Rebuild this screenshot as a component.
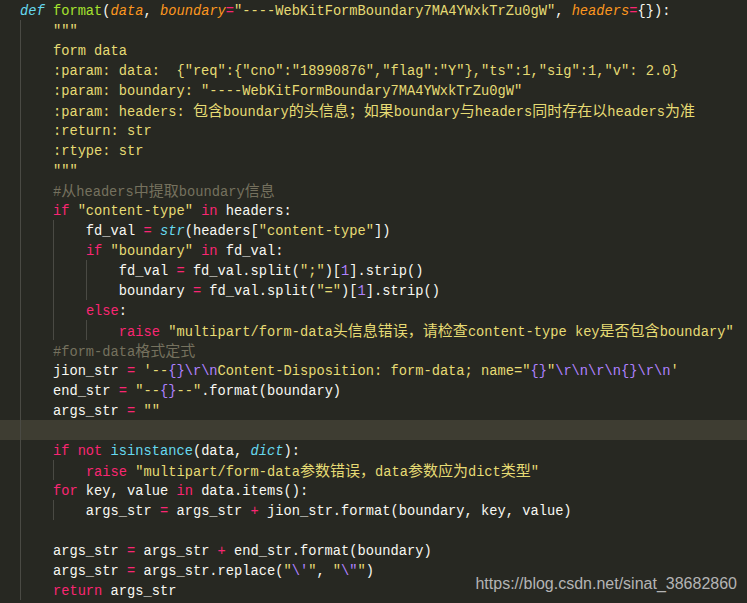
import React from "react";

type Tok = [string, string, boolean?];

const W = "text-[#f8f8f2]";
const K = "text-[#f92672]";
const S = "text-[#e6db74]";
const C = "text-[#75715e]";
const B = "text-[#66d9ef]";
const G = "text-[#a6e22e]";
const O = "text-[#fd971f]";
const P = "text-[#ae81ff]";

const lines: { toks: Tok[]; guides: number[]; hl?: boolean }[] = [
  {
    toks: [
      ["def", B, true],
      [" ", W],
      ["format", G],
      ["(", W],
      ["data", O, true],
      [", ", W],
      ["boundary", O, true],
      ["=", K],
      ['"----WebKitFormBoundary7MA4YWxkTrZu0gW"', S],
      [", ", W],
      ["headers", O, true],
      ["=", K],
      ["{}):", W],
    ],
    guides: [],
  },
  { toks: [['    """', S]], guides: [0] },
  { toks: [["    form data", S]], guides: [0] },
  { toks: [['    :param: data:  {"req":{"cno":"18990876","flag":"Y"},"ts":1,"sig":1,"v": 2.0}', S]], guides: [0] },
  { toks: [['    :param: boundary: "----WebKitFormBoundary7MA4YWxkTrZu0gW"', S]], guides: [0] },
  { toks: [["    :param: headers: 包含boundary的头信息；如果boundary与headers同时存在以headers为准", S]], guides: [0] },
  { toks: [["    :return: str", S]], guides: [0] },
  { toks: [["    :rtype: str", S]], guides: [0] },
  { toks: [['    """', S]], guides: [0] },
  { toks: [["    #从headers中提取boundary信息", C]], guides: [0] },
  {
    toks: [
      ["    ", W],
      ["if", K],
      [" ", W],
      ['"content-type"', S],
      [" ", W],
      ["in", K],
      [" headers:", W],
    ],
    guides: [0],
  },
  {
    toks: [
      ["        fd_val ", W],
      ["=", K],
      [" ", W],
      ["str", B, true],
      ["(headers[", W],
      ['"content-type"', S],
      ["])", W],
    ],
    guides: [0, 4],
  },
  {
    toks: [
      ["        ", W],
      ["if", K],
      [" ", W],
      ['"boundary"', S],
      [" ", W],
      ["in", K],
      [" fd_val:", W],
    ],
    guides: [0, 4],
  },
  {
    toks: [
      ["            fd_val ", W],
      ["=", K],
      [" fd_val.split(", W],
      ['";"', S],
      [")[", W],
      ["1", P],
      ["].strip()", W],
    ],
    guides: [0, 4, 8],
  },
  {
    toks: [
      ["            boundary ", W],
      ["=", K],
      [" fd_val.split(", W],
      ['"="', S],
      [")[", W],
      ["1", P],
      ["].strip()", W],
    ],
    guides: [0, 4, 8],
  },
  {
    toks: [
      ["        ", W],
      ["else", K],
      [":", W],
    ],
    guides: [0, 4],
  },
  {
    toks: [
      ["            ", W],
      ["raise", K],
      [" ", W],
      ['"multipart/form-data头信息错误，请检查content-type key是否包含boundary"', S],
    ],
    guides: [0, 4, 8],
  },
  { toks: [["    #form-data格式定式", C]], guides: [0] },
  {
    toks: [
      ["    jion_str ", W],
      ["=", K],
      [" ", W],
      ["'--", S],
      ["{}\\r\\n", P],
      ['Content-Disposition: form-data; name="', S],
      ["{}", P],
      ['"', S],
      ["\\r\\n\\r\\n{}\\r\\n", P],
      ["'", S],
    ],
    guides: [0],
  },
  {
    toks: [
      ["    end_str ", W],
      ["=", K],
      [" ", W],
      ['"--', S],
      ["{}", P],
      ['--"', S],
      [".format(boundary)", W],
    ],
    guides: [0],
  },
  {
    toks: [
      ["    args_str ", W],
      ["=", K],
      [" ", W],
      ['""', S],
    ],
    guides: [0],
  },
  { toks: [], guides: [0], hl: true },
  {
    toks: [
      ["    ", W],
      ["if", K],
      [" ", W],
      ["not", K],
      [" ", W],
      ["isinstance", B],
      ["(data, ", W],
      ["dict", B, true],
      ["):", W],
    ],
    guides: [0],
  },
  {
    toks: [
      ["        ", W],
      ["raise", K],
      [" ", W],
      ['"multipart/form-data参数错误，data参数应为dict类型"', S],
    ],
    guides: [0, 4],
  },
  {
    toks: [
      ["    ", W],
      ["for", K],
      [" key, value ", W],
      ["in", K],
      [" data.items():", W],
    ],
    guides: [0],
  },
  {
    toks: [
      ["        args_str ", W],
      ["=", K],
      [" args_str ", W],
      ["+", K],
      [" jion_str.format(boundary, key, value)", W],
    ],
    guides: [0, 4],
  },
  { toks: [], guides: [0] },
  {
    toks: [
      ["    args_str ", W],
      ["=", K],
      [" args_str ", W],
      ["+", K],
      [" end_str.format(boundary)", W],
    ],
    guides: [0],
  },
  {
    toks: [
      ["    args_str ", W],
      ["=", K],
      [" args_str.replace(", W],
      ['"', S],
      ["\\'", P],
      ['"', S],
      [", ", W],
      ['"', S],
      ['\\"', P],
      ['"', S],
      [")", W],
    ],
    guides: [0],
  },
  {
    toks: [
      ["    ", W],
      ["return", K],
      [" args_str", W],
    ],
    guides: [0],
  },
];

const CJK = /([\u3000-\u303f\u4e00-\u9fff\uff00-\uffef]+)/;

function renderText(text: string) {
  const parts = text.split(CJK);
  return parts.map((p, i) =>
    i % 2 === 1 ? (
      <span
        key={i}
        className="text-[15px] leading-none font-['Noto_Sans_CJK_SC',sans-serif]"
      >
        {p}
      </span>
    ) : (
      <React.Fragment key={i}>{p}</React.Fragment>
    )
  );
}

const guideClass: Record<number, string> = {
  0: "left-[20px]",
  4: "left-[53px]",
  8: "left-[86px]",
};

export default function App() {
  return (
    <div className="relative w-[747px] h-[603px] overflow-hidden bg-[#272822] font-['Liberation_Mono',monospace] text-[13.72px]">
      {lines.map((ln, i) => (
        <div
          key={i}
          className={`relative h-[20px] leading-[20px] whitespace-pre pl-[20px] ${ln.hl ? "bg-[#3e3d32]" : ""}`}
        >
          {ln.guides.map((g) => (
            <div
              key={g}
              className={`absolute top-0 h-[20px] w-px bg-[#4a4a44] ${guideClass[g]}`}
            />
          ))}
          <span className="relative top-[2px]">
            {ln.toks.map((t, j) => (
              <span key={j} className={`${t[1]} ${t[2] ? "italic" : ""}`}>
                {renderText(t[0])}
              </span>
            ))}
          </span>
        </div>
      ))}
      <div className="absolute right-[10px] top-[576px] font-['Liberation_Sans',Arial,sans-serif] text-[16px] leading-[16px] text-[#b4b4b4]">
        https://blog.csdn.net/sinat_38682860
      </div>
    </div>
  );
}
